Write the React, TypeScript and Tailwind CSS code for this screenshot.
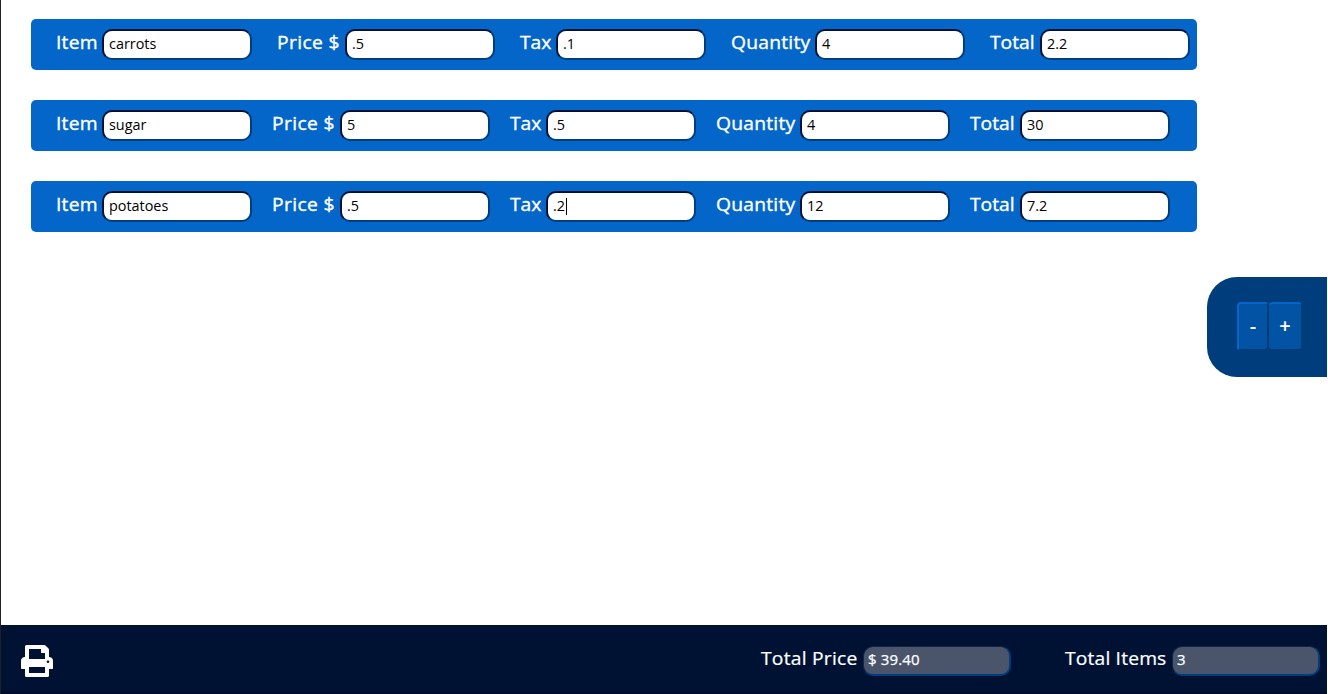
import React from "react";

const columns = [
  { label: "Item", width: "w-[46px]", tracking: "tracking-[0.2px]" },
  { label: "Price $", width: "w-[68px]", tracking: "tracking-[0.35px]" },
  { label: "Tax", width: "w-[36px]", tracking: "tracking-normal" },
  { label: "Quantity", width: "w-[84px]", tracking: "tracking-[0.22px]" },
  { label: "Total", width: "w-[50px]", tracking: "tracking-normal" },
];

const rows = [
  { gap: "gap-[25px]", values: ["carrots", ".5", ".1", "4", "2.2"], caret: -1 },
  { gap: "gap-[20px]", values: ["sugar", "5", ".5", "4", "30"], caret: -1 },
  { gap: "gap-[20px]", values: ["potatoes", ".5", ".2", "12", "7.2"], caret: 2 },
];

const totals = [
  { label: "Total Price", value: "$ 39.40", width: "w-[102px]", tracking: "tracking-[0.22px]" },
  { label: "Total Items", value: "3", width: "w-[107px]", tracking: "tracking-[0.15px]" },
];

type FieldProps = { label: string; value: string; width: string; tracking: string; focused: boolean };

function Field({ label, value, width, tracking, focused }: FieldProps) {
  return (
    <label className="flex items-start">
      <span className={`${width} ${tracking} origin-left scale-x-[1.07] whitespace-nowrap text-[18px] leading-[26px] text-white [-webkit-text-stroke:0.35px_white]`}>{label}</span>
      <span className="flex h-[31px] w-[150px] items-center rounded-[10px] border-2 border-t-[#001233] border-r-[#003d7c] border-b-[#003d7c] border-l-[#001233] bg-white pb-px pl-[5px] text-[14.4px] text-black">
        {value}
        {focused && <span className="ml-px h-[17px] w-px bg-black" />}
      </span>
    </label>
  );
}

function PrintIcon() {
  return (
    <svg className="ml-[20px] h-[32px] w-[32px]" viewBox="0 0 32 32" fill="currentColor">
      <path
        fillRule="evenodd"
        d="M5.5 0H23q1 0 1.700.7L27.300 3.300Q28 4 28 5V12h.5Q32 12.500 32 16v7.200q0 .8-.8.8H28v6.500q0 1.500-1.500 1.500h-21Q4 32 4 30.500V24H.8Q0 24 0 23.200V16q0-3.500 3.500-4H4V1.500Q4 0 5.500 0ZM8 4v10h16V8h-4V4ZM8 22v6h16v-6ZM27 15.500a1.300 1.300 0 1 0 0 2.600a1.300 1.300 0 1 0 0-2.600Z"
      />
    </svg>
  );
}

export default function App() {
  return (
    <div className="flex h-[694px] w-[1328px] flex-col border-l border-[#202124] bg-white font-['Open_Sans',sans-serif]">
      <main className="flex h-[625px] justify-between">
        <div className="flex flex-col gap-[30px] pt-[19px] pl-[30px]">
          {rows.map((row, i) => (
            <section key={i} className={`flex h-[51px] w-[1166px] rounded-[5px] bg-[#0466c8] pt-[10px] pl-[25px] ${row.gap}`}>
              {columns.map((column, j) => (
                <Field key={column.label} {...column} value={row.values[j]} focused={row.caret === j} />
              ))}
            </section>
          ))}
        </div>
        <aside className="mt-[277px] mr-px flex h-[100px] w-[120px] rounded-l-[30px] bg-[#003d7c] pt-[25px] pl-[30px] text-[20px] font-semibold text-white">
          <button className="h-[49px] w-[32px] rounded-[4px] border-2 border-t-[#0466c8] border-r-[#023b75] border-b-[#023b75] border-l-[#0466c8] bg-[#0353a4] pb-px">-</button>
          <button className="h-[49px] w-[33px] rounded-[4px] border-t-2 border-r border-b-2 border-t-[#0466c8] border-r-[#023b75] border-b-[#023b75] bg-[#0353a4] pb-px">+</button>
        </aside>
      </main>
      <footer className="mr-px flex h-[69px] border-b-2 border-[#000d26] bg-[#001233] pt-[20px] text-white">
        <PrintIcon />
        <div className="ml-[708px] flex gap-[54px]">
          {totals.map(({ label, value, width, tracking }) => (
            <label key={label} className="flex items-start">
              <span className={`${width} ${tracking} origin-left scale-x-[1.07] whitespace-nowrap text-[18px] leading-[26px] [-webkit-text-stroke:0.2px_white]`}>{label}</span>
              <span className="mt-px flex h-[30px] w-[148px] items-center rounded-[10px] border-t border-r-2 border-b-2 border-l border-t-[#152540] border-r-[#003d7c] border-b-[#003d7c] border-l-[#152540] bg-[#4a556c] pb-[2px] pl-[4px] text-[15px] tracking-[0.15px] [-webkit-text-stroke:0.25px_white]">
                {value}
              </span>
            </label>
          ))}
        </div>
      </footer>
    </div>
  );
}
